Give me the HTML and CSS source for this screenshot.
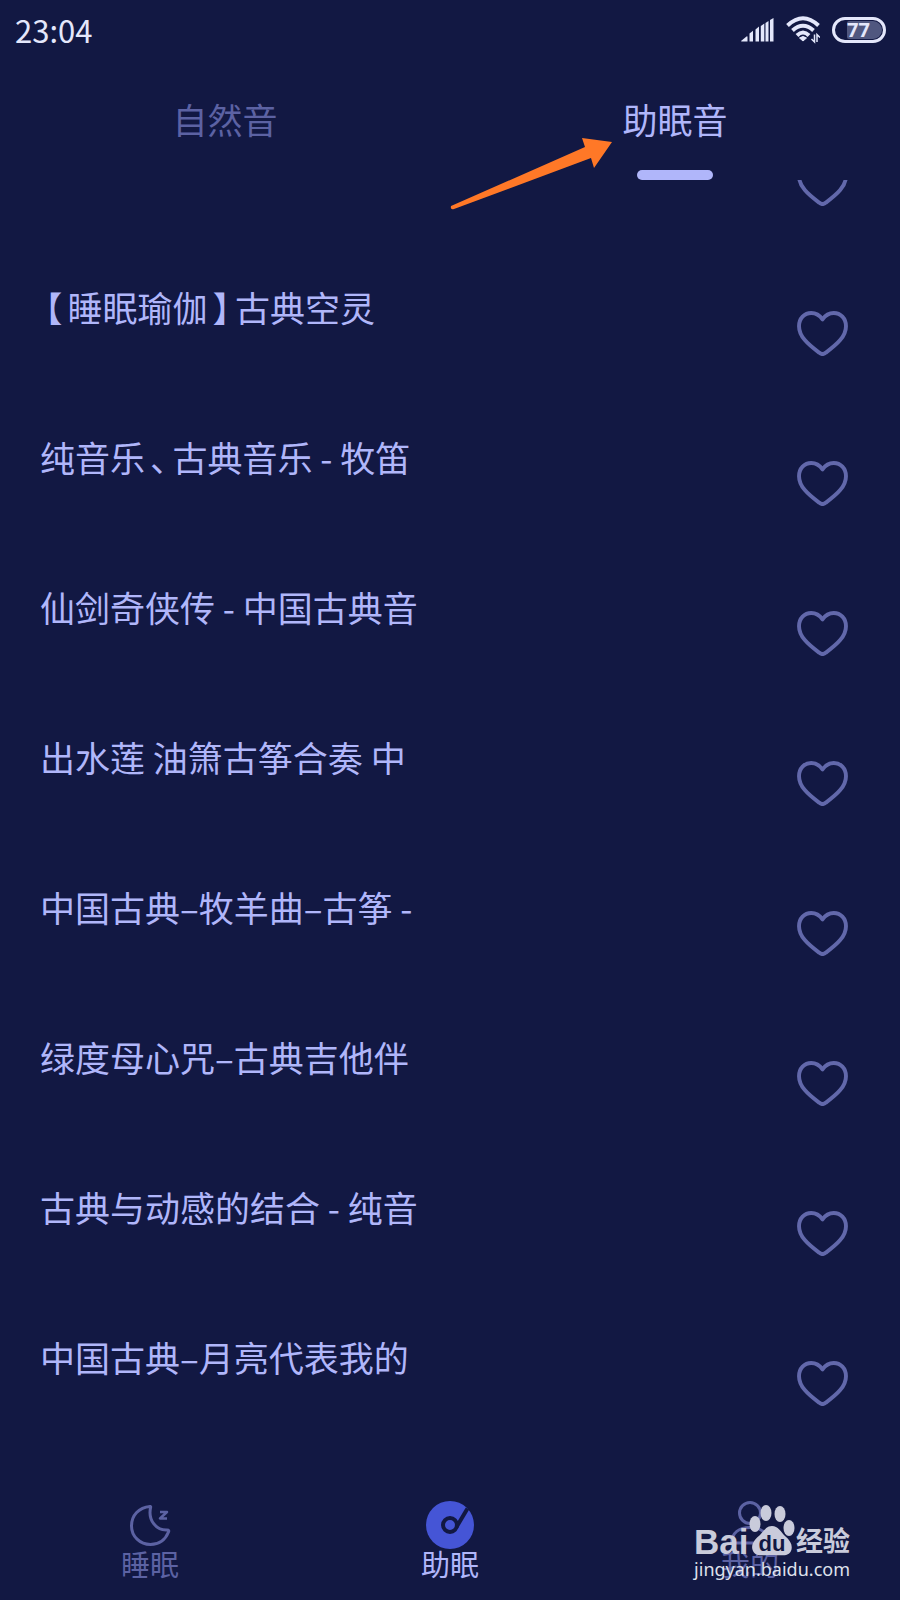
FILE: index.html
```
<!DOCTYPE html>
<html lang="zh-CN">
<head>
    <meta charset="UTF-8">
    <meta name="viewport" content="width=device-width, initial-scale=1.0">
    <title>助眠音</title>
    <link rel="stylesheet" href="styles.css">
</head>
<body>
    <svg class="icones" width="0" height="0">
        <symbol id="heart" viewBox="0 0 52 46">
            <path d="M26 8.500C22.500 3.500 18.500 2 14.500 2C7.500 2 2 7.500 2 15.500C2 26 11 34 22.500 42.500Q26 45.500 29.500 42.500C41 34 50 26 50 15.500C50 7.500 44.500 2 37.500 2C33.500 2 29.500 3.500 26 8.500Z" fill="none" stroke="currentColor" stroke-width="4" stroke-linejoin="round"/>
        </symbol>
    </svg>

    <header class="status">
        <span class="hora">23:04</span>
        <div class="status-icons">
            <svg width="33" height="24" viewBox="0 0 33 24" fill="#e4e7fb">
                <path d="M0 23L5.500 18.500Q6.500 18 6.500 19V23.500H0.500Z"/>
                <path d="M8.500 15.500L12 12.800V23.500H8.500Z"/>
                <path d="M14.500 11.500L18 8.500V23.500H14.500Z"/>
                <path d="M19.800 8L23.300 5.500V23.500H19.800Z"/>
                <path d="M24.500 5L27.500 3V23.500H24.500Z"/>
                <path d="M29 2L32.500 0V23.500H29Z"/>
            </svg>
            <svg class="wifi" width="34" height="28" viewBox="0 0 34 28" fill="none" stroke="#e4e7fb">
                <path d="M1.500 9.500Q17 -5 32.500 9.500" stroke-width="4"/>
                <path d="M6.500 14.500Q17 5 27.500 14.500" stroke-width="4"/>
                <path d="M11 19.500Q17 13.500 23 19.500" stroke-width="4"/>
                <path d="M13.500 22Q17 19 20.500 22L17 25Z" fill="#e4e7fb" stroke-width="1"/>
                <path d="M28.500 18.500V26L25.500 23M31 26V18.500L34 21.500" stroke-width="1.500"/>
            </svg>
            <span class="bateria"><span class="nivel">77</span></span>
        </div>
    </header>

    <nav class="tabs">
        <button class="tab">自然音</button>
        <button class="tab ativa">助眠音</button>
    </nav>

    <main class="lista-area">
        <ul class="lista">
            <li class="item">
                <button class="curtir"><svg width="51" height="45"><use href="#heart"/></svg></button>
            </li>
            <li class="item">
                <span class="titulo"><span class="pontuacao">【</span>睡眠瑜伽<span class="pontuacao">】</span>古典空灵</span>
                <button class="curtir"><svg width="51" height="45"><use href="#heart"/></svg></button>
            </li>
            <li class="item">
                <span class="titulo">纯音乐<span class="pontuacao">、</span>古典音乐 - 牧笛</span>
                <button class="curtir"><svg width="51" height="45"><use href="#heart"/></svg></button>
            </li>
            <li class="item">
                <span class="titulo">仙剑奇侠传 - 中国古典音</span>
                <button class="curtir"><svg width="51" height="45"><use href="#heart"/></svg></button>
            </li>
            <li class="item">
                <span class="titulo">出水莲 油箫古筝合奏 中</span>
                <button class="curtir"><svg width="51" height="45"><use href="#heart"/></svg></button>
            </li>
            <li class="item">
                <span class="titulo">中国古典–牧羊曲–古筝 -</span>
                <button class="curtir"><svg width="51" height="45"><use href="#heart"/></svg></button>
            </li>
            <li class="item">
                <span class="titulo">绿度母心咒–古典吉他伴</span>
                <button class="curtir"><svg width="51" height="45"><use href="#heart"/></svg></button>
            </li>
            <li class="item">
                <span class="titulo">古典与动感的结合 - 纯音</span>
                <button class="curtir"><svg width="51" height="45"><use href="#heart"/></svg></button>
            </li>
            <li class="item">
                <span class="titulo">中国古典–月亮代表我的</span>
                <button class="curtir"><svg width="51" height="45"><use href="#heart"/></svg></button>
            </li>
        </ul>
    </main>

    <footer class="menu">
        <a class="menu-item" href="#">
            <svg width="48" height="48" viewBox="0 0 48 48" fill="none" stroke="currentColor" stroke-width="3" stroke-linejoin="round">
                <path d="M24 5.500Q25 5 24.500 7C22 19 30 29.500 41 29C43 29 43 30 42.500 31C39 39.500 32 43.500 24.500 43.500C14 43.500 5.500 35.500 5.500 25C5.500 14 13 6.500 24 5.500Z"/>
                <path d="M34 11L41 11L34 17.500H41" stroke-width="2.500"/>
            </svg>
            <span>睡眠</span>
        </a>
        <a class="menu-item atual" href="#">
            <svg width="48" height="48" viewBox="0 0 48 48">
                <circle cx="24" cy="24" r="24" fill="#4555d6"/>
                <circle cx="24" cy="24" r="7" fill="none" stroke="#121843" stroke-width="4"/>
                <path d="M30.500 26L41.500 7.500" stroke="#121843" stroke-width="4"/>
            </svg>
            <span>助眠</span>
        </a>
        <a class="menu-item" href="#">
            <svg width="48" height="48" viewBox="0 0 48 48" fill="none" stroke="currentColor" stroke-width="3">
                <circle cx="24" cy="12" r="10.500"/>
                <path d="M5.500 42C6 32 13 26.500 24 26.500C35 26.500 42 32 42.500 42Z" stroke-linejoin="round"/>
            </svg>
            <span>我的</span>
        </a>
    </footer>

    <!-- seta que aponta para a aba ativa -->
    <svg class="seta" width="164" height="74" viewBox="0 0 164 74">
        <path d="M1 69Q0 73 4 72L141 21L144 31L162 5L132 1L135 10Z" fill="#ff7827"/>
    </svg>

    <div class="marca">
        <div class="marca-topo">
            <span class="bai">Bai</span>
            <svg width="46" height="52" viewBox="0 0 46 52">
                <g fill="#c9cbdb">
                    <ellipse cx="6" cy="20" rx="5.500" ry="8"/>
                    <ellipse cx="17" cy="9" rx="5.500" ry="8"/>
                    <ellipse cx="31" cy="10" rx="5.500" ry="8"/>
                    <ellipse cx="40" cy="24" rx="5.500" ry="8"/>
                    <path d="M23 22C29 22 32 28 36 32C42 37 44 42 42 47C39 53 32 51 23 51C14 51 7 53 4 47C1 41 6 35 11 31C15 27 17 22 23 22Z"/>
                </g>
                <text class="du" x="23" y="47" text-anchor="middle">du</text>
            </svg>
            <span class="jingyan">经验</span>
        </div>
        <span class="marca-url">jingyan.baidu.com</span>
    </div>
</body>
</html>
```
FILE: styles.css
```
* {
    box-sizing: border-box;
}

body {
    display: flex;
    flex-direction: column;
    position: relative;
    height: 100vh;
    margin: 0;
    background-color: #121843;
    color: #b0b6fa;
    font-family: 'Noto Sans CJK SC', sans-serif;
    overflow: hidden;
}

button {
    background: none;
    border: none;
    padding: 0;
    font-family: inherit;
    cursor: pointer;
}

svg {
    display: block;
    flex: none;
}

.icones {
    position: absolute;
}

.status {
    display: flex;
    align-items: center;
    justify-content: space-between;
    height: 60px;
    padding: 0 14px 0 15px;
    color: #e4e7fb;
}

.hora {
    font-size: 31px;
    line-height: 60px;
}

.status-icons {
    display: flex;
    align-items: center;
    gap: 12px;
}

.bateria {
    display: flex;
    width: 54px;
    height: 26px;
    padding: 1px 1px 1px 12px;
    border: 3px solid #e4e7fb;
    border-radius: 13px;
}

.nivel {
    width: 100%;
    border-radius: 2px 9px 9px 2px;
    background-color: #50577f;
    font-family: 'Open Sans', sans-serif;
    font-size: 20px;
    font-weight: bold;
    line-height: 18px;
}

.tabs {
    display: flex;
    height: 120px;
}

.tab {
    display: flex;
    flex: 1;
    flex-direction: column;
    align-items: center;
    justify-content: space-between;
    padding-top: 34px;
    color: #5c62a3;
    font-size: 35px;
    line-height: 50px;
}

.tab.ativa {
    color: #b0b6fa;
}

.tab.ativa::after {
    content: "";
    width: 76px;
    height: 10px;
    border-radius: 5px;
    background-color: #b0b6fa;
}

.lista-area {
    flex: 1;
    min-height: 0;
    overflow: hidden;
}

/* a lista já começa um pouco rolada */
.lista {
    margin: -98px 0 0;
    padding: 0;
    list-style: none;
}

.item {
    display: flex;
    align-items: center;
    height: 150px;
    padding: 0 52px 0 40px;
}

.titulo {
    font-size: 35px;
    line-height: 50px;
    white-space: nowrap;
}

.pontuacao {
    padding: 0 5px;
    font-feature-settings: "halt";
}

.curtir {
    margin-left: auto;
    padding-top: 52px;
    color: #6268ab;
}

.menu {
    display: flex;
    height: 166px;
    padding-top: 67px;
}

.menu-item {
    display: flex;
    flex: 1;
    flex-direction: column;
    align-items: center;
    color: #5c62a3;
    font-size: 29px;
    line-height: 28px;
    text-decoration: none;
}

.menu-item.atual {
    color: #b0b6fa;
}

.seta {
    position: absolute;
    top: 137px;
    left: 450px;
}

.marca {
    position: absolute;
    right: 50px;
    bottom: 18px;
    color: #c9cbdb;
}

.marca-topo {
    display: flex;
    align-items: flex-end;
    justify-content: space-between;
}

.bai {
    font-family: 'Liberation Sans', sans-serif;
    font-size: 35px;
    font-weight: bold;
    line-height: 28px;
}

.du {
    fill: #121843;
    font-family: 'Liberation Sans', sans-serif;
    font-size: 22px;
    font-weight: bold;
}

.jingyan {
    font-size: 27px;
    font-weight: bold;
    line-height: 32px;
}

.marca-url {
    display: block;
    color: #dfe1ec;
    font-family: 'Noto Sans', sans-serif;
    font-size: 18px;
    line-height: 26px;
}
```
